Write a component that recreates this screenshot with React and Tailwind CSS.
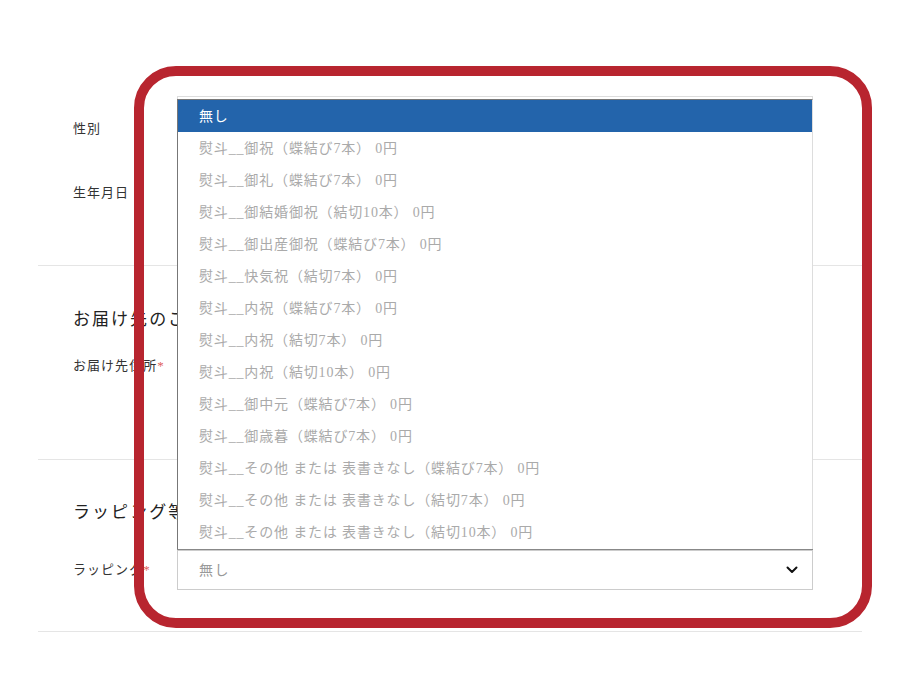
const OPTIONS = [
  '熨斗__御祝（蝶結び7本） 0円',
  '熨斗__御礼（蝶結び7本） 0円',
  '熨斗__御結婚御祝（結切10本） 0円',
  '熨斗__御出産御祝（蝶結び7本） 0円',
  '熨斗__快気祝（結切7本） 0円',
  '熨斗__内祝（蝶結び7本） 0円',
  '熨斗__内祝（結切7本） 0円',
  '熨斗__内祝（結切10本） 0円',
  '熨斗__御中元（蝶結び7本） 0円',
  '熨斗__御歳暮（蝶結び7本） 0円',
  '熨斗__その他 または 表書きなし（蝶結び7本） 0円',
  '熨斗__その他 または 表書きなし（結切7本） 0円',
  '熨斗__その他 または 表書きなし（結切10本） 0円',
];

const font = {
  fontFamily: '"Liberation Serif", "Noto Sans CJK JP", serif',
};

function Label({ children, required }) {
  return (
    <div className="w-[139px] shrink-0 pl-[35px] text-[13px] leading-[18px] tracking-[0.08em] text-[#333]">
      {children}
      {required && <span className="text-[#e0605a]">*</span>}
    </div>
  );
}

function Heading({ children }) {
  return (
    <h2 className="pl-[35px] text-[17px] leading-6 tracking-[0.12em] text-[#222]">
      {children}
    </h2>
  );
}

function Chevron() {
  return (
    <svg width="12" height="8" viewBox="0 0 12 8" fill="none">
      <polyline
        points="1.5,1.5 6,6 10.5,1.5"
        stroke="#111"
        strokeWidth="2"
        strokeLinecap="round"
        strokeLinejoin="round"
      />
    </svg>
  );
}

export default function App() {
  return (
    <div className="relative h-[700px] w-[900px] overflow-hidden bg-white" style={font}>
      <div className="mx-[38px] pt-[96px]">
        {/* 基本情報 */}
        <div className="flex h-[66px] items-center pr-[49px]">
          <Label>性別</Label>
          <div className="h-full flex-1 border border-[#ddd]" />
        </div>
        <div className="mt-[14px] flex h-[34px] items-center pr-[49px]">
          <Label>生年月日</Label>
          <div className="flex-1" />
        </div>
        <div className="mt-[55px] border-t border-[#e5e5e5]" />

        {/* お届け先 */}
        <div className="mt-[42px]">
          <Heading>お届け先のご住所</Heading>
        </div>
        <div className="mt-[25px] flex pr-[49px]">
          <Label required>お届け先住所</Label>
          <div className="h-10 flex-1 border border-[#ddd]" />
        </div>
        <div className="mt-[62px] border-t border-[#e5e5e5]" />

        {/* ラッピング */}
        <div className="mt-[41px]">
          <Heading>ラッピング等のご指定</Heading>
        </div>
        <div className="mt-[25px] flex items-center pr-[49px]">
          <Label required>ラッピング</Label>
          <div className="relative flex-1">
            <div className="flex h-10 items-center justify-between border border-[#ccc] pl-[21px] pr-[14px] text-[14px] tracking-[0.1em] text-[#999]">
              <span>無し</span>
              <Chevron />
            </div>
            {/* 開いたドロップダウン */}
            <ul className="absolute bottom-full left-0 right-0 border border-b-0 border-[#777] border-r-[#ddd] bg-white text-[14px] tracking-[0.06em]">
              <li className="flex h-8 items-center bg-[#2364ab] pl-[21px] text-white">無し</li>
              {OPTIONS.map((o) => (
                <li key={o} className="flex h-8 items-center pl-[21px] text-[#aaa]">
                  {o}
                </li>
              ))}
              <li className="h-[2px]" />
            </ul>
            <div className="absolute -top-px left-0 right-0 border-t border-[#888]" />
          </div>
        </div>
        <div className="mt-[41px] border-t border-[#e5e5e5]" />
      </div>

      {/* 赤枠の注釈 */}
      <div className="pointer-events-none absolute left-[134px] top-[66px] h-[562px] w-[738px] rounded-[42px] border-[10px] border-[#b8252f]" />
    </div>
  );
}
